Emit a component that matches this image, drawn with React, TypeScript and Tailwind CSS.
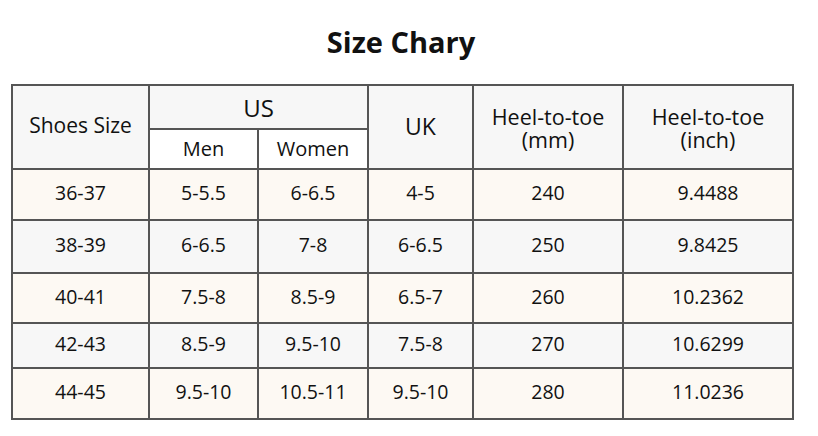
const rows = [
  ["36-37", "5-5.5", "6-6.5", "4-5", "240", "9.4488"],
  ["38-39", "6-6.5", "7-8", "6-6.5", "250", "9.8425"],
  ["40-41", "7.5-8", "8.5-9", "6.5-7", "260", "10.2362"],
  ["42-43", "8.5-9", "9.5-10", "7.5-8", "270", "10.6299"],
  ["44-45", "9.5-10", "10.5-11", "9.5-10", "280", "11.0236"],
];

const heights = ["h-[51px]", "h-[53px]", "h-[50px]", "h-[45px]", "h-[51px]"];

export default function App() {
  const cell = "border-2 border-[#555] text-center align-middle p-0 font-normal";
  return (
    <div className="w-[818px] h-[436px] bg-white text-[#111] font-['Open_Sans',sans-serif]">
      <h1 className="pt-[22px] h-[84px] text-center text-[29px] font-bold leading-[40px] pr-[16px]">Size Chary</h1>
      <table className="ml-[11px] w-[781px] table-fixed border-collapse text-[19.5px] leading-[22px]">
        <colgroup>
          <col className="w-[137px]" />
          <col className="w-[109px]" />
          <col className="w-[110px]" />
          <col className="w-[105px]" />
          <col className="w-[150px]" />
          <col className="w-[170px]" />
        </colgroup>
        <thead className="bg-[#f7f7f7]">
          <tr className="h-[44px]">
            <th rowSpan={2} className={`${cell} text-[21px] pb-[4px]`}>Shoes Size</th>
            <th colSpan={2} className={`${cell} text-[24px] pt-[2px]`}>US</th>
            <th rowSpan={2} className={`${cell} text-[23px] pb-[2px]`}>UK</th>
            <th rowSpan={2} className={`${cell} text-[21.5px] leading-[23px] pt-[2px]`}>
              <div>Heel-to-toe</div>
              <div>(mm)</div>
            </th>
            <th rowSpan={2} className={`${cell} text-[21.5px] leading-[23px] pt-[2px]`}>
              <div>Heel-to-toe</div>
              <div>(inch)</div>
            </th>
          </tr>
          <tr className="h-[40px]">
            <th className={`${cell} text-[20px] bg-white`}>Men</th>
            <th className={`${cell} text-[20px] bg-white`}>Women</th>
          </tr>
        </thead>
        <tbody>
          {rows.map((r, i) => (
            <tr key={r[0]} className={`${heights[i]} ${i % 2 === 0 ? "bg-[#fdf9f3]" : "bg-[#f7f7f7]"}`}>
              {r.map((v, j) => (
                <td key={j} className={`${cell} pb-[3px]`}>{v}</td>
              ))}
            </tr>
          ))}
        </tbody>
      </table>
    </div>
  );
}
